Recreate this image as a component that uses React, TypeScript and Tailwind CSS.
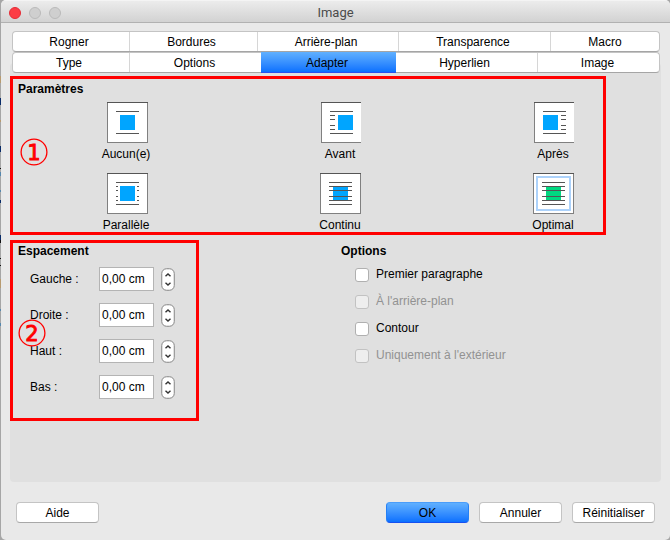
import type { ReactNode } from "react";

type Kind = "none" | "before" | "after" | "parallel" | "through" | "optimal";

const dashRows = [13.5, 17.5, 23.5, 27.5];

function WrapIcon({ kind }: { kind: Kind }) {
  const sx = kind === "before" ? 17 : kind === "after" ? 9 : 13;
  const through = kind === "through" || kind === "optimal";
  const narrow = kind === "before" || kind === "after";
  return (
    <svg width="41" height="41" viewBox="0 0 41 41" shapeRendering="crispEdges" className="block">
      <rect width={narrow ? 40 : 41} height="41" fill="#808080" />
      <rect width={narrow ? 40 : 41} height="1" fill="#555" />
      <rect x="1" y="1" width="39" height="39" fill="#fff" />
      {kind === "optimal" && <rect x="4" y="4" width="33" height="33" fill="none" stroke="#acd2fb" strokeWidth="2" />}
      <rect x={sx} y={through ? 14 : 13} width="15" height={through ? 13 : 15} fill={kind === "optimal" ? "#00d981" : "#00a5ff"} />
      <path d="M9 9.5h23M9 31.5h23" stroke="#555" />
      {through && <path d="M9 13.5h23M9 17.5h23M9 23.5h23M9 27.5h23" stroke="#555" />}
      {kind === "before" && <path d="M9 13.5h5M9 17.5h5M9 23.5h5M9 27.5h5" stroke="#555" />}
      {kind === "after" && <path d="M27 13.5h5M27 17.5h5M27 23.5h5M27 27.5h5" stroke="#555" />}
      {kind === "parallel" && dashRows.map((y) => <path key={y} d={`M9 ${y}h2M30 ${y}h2`} stroke="#555" />)}
    </svg>
  );
}

function WrapOption({ kind, label, className, labelClass = "pr-[2px]" }: { kind: Kind; label: string; className: string; labelClass?: string }) {
  return (
    <div className={`flex flex-col items-center w-[80px] ${className}`}>
      <WrapIcon kind={kind} />
      <span className={`mt-[3px] leading-[16px] ${labelClass}`}>{label}</span>
    </div>
  );
}

function Segment({ children, className }: { children: ReactNode; className: string }) {
  return <div className={`flex items-center justify-center h-full ${className}`}>{children}</div>;
}

function Spin({ label }: { label: string }) {
  return (
    <div className="flex items-center h-[24px] mb-[12px]">
      <span className="w-[69px]">{label}</span>
      <div className="w-[55px] h-[24px] bg-white border border-[#b4b4b4] pl-[2px] leading-[23px]">0,00 cm</div>
      <svg width="14" height="23" viewBox="0 0 14 23" className="ml-[7px]">
        <rect x=".75" y=".75" width="12.5" height="21.5" rx="4.8" fill="#fff" stroke="#858585" />
        <path d="M4.5 8.3L7 5.9l2.5 2.4M4.5 14.7L7 17.1l2.5-2.4" fill="none" stroke="#333" strokeWidth="1.4" />
      </svg>
    </div>
  );
}

function Check({ label, disabled }: { label: string; disabled?: boolean }) {
  return (
    <div className={`flex h-[27px] items-start ${disabled ? "text-[#929292]" : ""}`}>
      <span className={`mt-[1px] h-[14px] w-[14px] rounded-[3px] border ${disabled ? "bg-[#eeeeee] border-[#c2c2c2]" : "bg-white border-[#b0b0b0]"}`} />
      <span className="ml-[7px] -mt-[1px] leading-[16px]">{label}</span>
    </div>
  );
}

function Button({ label, primary, className = "" }: { label: string; primary?: boolean; className?: string }) {
  return (
    <button
      className={`h-[21px] w-[83px] rounded-[4px] border leading-[20px] text-center ${
        primary
          ? "bg-linear-to-b from-[#60b0ff] to-[#0870ff] border-t-[#4a9dfa] border-x-[#2580f5] border-b-[#1650f0]"
          : "bg-white border-[#c4c4c4] border-b-[#a8a8a8]"
      } ${className}`}
    >
      {label}
    </button>
  );
}

function Marker({ digit, className }: { digit: string; className: string }) {
  return (
    <svg width="30" height="30" viewBox="0 0 30 30" className={`absolute ${className}`}>
      <circle cx="15" cy="15" r="12.9" fill="none" stroke="#f00" strokeWidth="1.3" />
      <text x="15" y="22.8" textAnchor="middle" fill="#f00" stroke="#f00" strokeWidth="0.9" fontFamily="DejaVu Sans, sans-serif" fontSize="21">
        {digit}
      </text>
    </svg>
  );
}

export default function App() {
  return (
    <div className="relative w-[670px] h-[540px] overflow-hidden bg-[#a6a6a6] font-['Liberation_Sans',Arial,sans-serif] text-[12px] text-black">
      <svg width="1" height="540" className="absolute left-0 top-0" shapeRendering="crispEdges">
        <path d="M.5 76v7M.5 120v2M.5 279v9" stroke="#b89b70" />
        <path d="M.5 98v7M.5 146v6M.5 200v3M.5 235v5" stroke="#092b68" />
        <path d="M.5 168v1M.5 240v3M.5 258v1M.5 265v1" stroke="#111" />
        <path d="M.5 172v4M.5 190v2M.5 309v2M.5 323v3" stroke="#5687ad" />
      </svg>
      <div className="ml-px w-[669px] h-[540px] rounded-[5px] bg-[#e9e9e9] overflow-hidden">
        <header className="relative h-[23px] bg-linear-to-b from-[#ececec] to-[#d2d2d2] border-b border-[#b1b1b1] border-t border-t-[#f4f4f4] flex items-center">
          <div className="flex gap-[8px] pl-[8px] pt-[2px]">
            <span className="h-[12px] w-[12px] rounded-full bg-[#fc3d45] border border-[#e52c36]" />
            <span className="h-[12px] w-[12px] rounded-full bg-[#cfcfcf] border border-[#bababa]" />
            <span className="h-[12px] w-[12px] rounded-full bg-[#cfcfcf] border border-[#bababa]" />
          </div>
          <h1 className="absolute inset-x-0 top-[3px] text-center font-['Roboto',sans-serif] text-[13px] leading-[18px] text-[#4b4b4b]">Image</h1>
        </header>

        <nav className="relative z-10 mt-[8px] ml-[11px] w-[648px]">
          <div className="flex h-[21px] rounded-[4px] bg-white border border-[#c4c4c4] border-b-[#a5a5a5]">
            <Segment className="w-[117px] border-r border-[#d6d6d6] pr-[4px]">Rogner</Segment>
            <Segment className="w-[128px] border-r border-[#d6d6d6] pr-[4px]">Bordures</Segment>
            <Segment className="w-[141px] border-r border-[#d6d6d6] pr-[4px]">Arrière-plan</Segment>
            <Segment className="w-[152px] border-r border-[#d6d6d6] pr-[3px]">Transparence</Segment>
            <Segment className="w-[108px]">Macro</Segment>
          </div>
          <div className="flex h-[21px] rounded-[4px] bg-white border border-[#c4c4c4] border-b-[#a5a5a5]">
            <Segment className="w-[117px] border-r border-[#d6d6d6] pr-[4px]">Type</Segment>
            <Segment className="w-[131px] pr-[2px]">Options</Segment>
            <div className="-mt-px h-[21px] w-[135px] flex items-center justify-center bg-linear-to-b from-[#60b0ff] to-[#0870ff] border-b border-[#2850f0] pt-[2px] pr-[3px]">Adapter</div>
            <Segment className="w-[142px] border-r border-[#d6d6d6] pr-[4px]">Hyperlien</Segment>
            <Segment className="w-[121px] pr-[2px]">Image</Segment>
          </div>
        </nav>

        <main className="-mt-[10px] ml-[9px] w-[651px] h-[419px] rounded-[4px] bg-[#e0e0e0] pt-[13px]">
          <section className="relative h-[159px] w-[596px] border-3 border-[#ff0000] pl-[5px]">
            <h2 className="pt-[2px] font-bold leading-[16px]">Paramètres</h2>
            <div className="mt-[5px] flex">
              <WrapOption kind="none" label="Aucun(e)" className="ml-[69px]" />
              <WrapOption kind="before" label="Avant" className="ml-[134px]" />
              <WrapOption kind="after" label="Après" className="ml-[133px]" />
            </div>
            <div className="mt-[11px] flex">
              <WrapOption kind="parallel" label="Parallèle" className="ml-[69px]" />
              <WrapOption kind="through" label="Continu" className="ml-[133px]" labelClass="" />
              <WrapOption kind="optimal" label="Optimal" className="ml-[133px]" labelClass="" />
            </div>
            <Marker digit="1" className="left-[6px] top-[58px]" />
          </section>
          <div className="mt-[5px] flex">
            <section className="relative h-[181px] w-[189px] border-3 border-[#ff0000] pl-[5px]">
              <h2 className="leading-[16px] font-bold">Espacement</h2>
              <div className="pl-[12px] pt-[8px]">
                <Spin label="Gauche :" />
                <Spin label="Droite :" />
                <Spin label="Haut :" />
                <Spin label="Bas :" />
              </div>
              <Marker digit="2" className="left-[4px] top-[75px]" />
            </section>
            <section className="ml-[142px] pt-[3px]">
              <h2 className="font-bold leading-[16px]">Options</h2>
              <div className="pl-[14px] pt-[8px]">
                <Check label="Premier paragraphe" />
                <Check label="À l'arrière-plan" disabled />
                <Check label="Contour" />
                <Check label="Uniquement à l'extérieur" disabled />
              </div>
            </section>
          </div>
        </main>

        <footer className="mt-[20px] flex pl-[15px]">
          <Button label="Aide" />
          <Button label="OK" primary className="ml-[287px]" />
          <Button label="Annuler" className="ml-[10px]" />
          <Button label="Réinitialiser" className="ml-[10px]" />
        </footer>
      </div>
    </div>
  );
}
